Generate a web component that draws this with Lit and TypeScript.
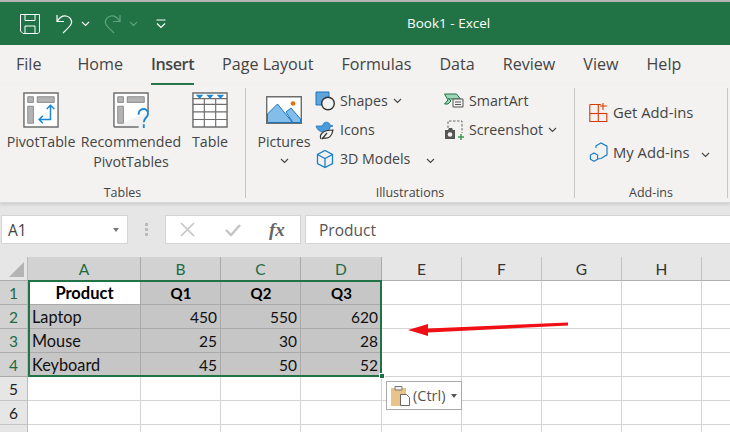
import { LitElement, html, css, svg } from "lit";
import { customElement } from "lit/decorators.js";

const chevron = html`<svg class="chev" width="9" height="6" viewBox="0 0 9 6"><path d="M1 1l3.500 3.500L8 1" fill="none" stroke="#444" stroke-width="1.100"/></svg>`;

const gridIcon = (body: unknown) => html`<svg width="36" height="36" viewBox="0 0 38 38">${body}</svg>`;

const icons = {
  pivot: gridIcon(svg`
    <path d="M1 1h36v36H1z" fill="#fff" stroke="#6d6d6d" stroke-width="1.500"/>
    <path d="M5 5h6v6H5zM15 5h18v6H15zM5 15h6v18H5z" fill="#b3b3b3" stroke="#8a8a8a"/>
    <path d="M17 29h12V15M25 18l4-4 4 4M21 25l-4 4 4 4" fill="none" stroke="#1b86d1" stroke-width="1.600"/>`),
  recommended: gridIcon(svg`
    <path d="M1 37V1h36v20M1 37h26" fill="#fff" stroke="#6d6d6d" stroke-width="1.500"/>
    <path d="M5 5h6v6H5zM15 5h18v6H15zM5 15h6v18H5z" fill="#b3b3b3" stroke="#8a8a8a"/>
    <path d="M27 24c0-8 10-8 10-1 0 4-4.500 4-4.500 9M32.500 34v4" fill="none" stroke="#1b86d1" stroke-width="2"/>`),
  table: gridIcon(svg`
    <path d="M1 1h36v36H1z" fill="#fff" stroke="#6d6d6d" stroke-width="1.500"/>
    <path d="M1 13h36M1 21h36M1 29h36M13 7v30M25 7v30M1 7h36" fill="none" stroke="#6d6d6d" stroke-width="1.200"/>
    <path d="M4 3h8l-4 4zM15 3h8l-4 4zM26 3h8l-4 4z" fill="#1b86d1"/>`),
  picture: html`<svg width="36" height="28" viewBox="0 0 36 28">
    <path d="M.7.700h34.600v26.600H.7z" fill="#fff" stroke="#6d6d6d" stroke-width="1.400"/>
    <path d="M1.500 18l10-10 15 18.500H1.500z" fill="#83bdea" stroke="#1b75bb"/>
    <path d="M20 16l5-4 9.500 11v3.500H27z" fill="#83bdea" stroke="#1b75bb"/>
    <circle cx="27" cy="7.500" r="2.300" fill="#e5700f"/>
  </svg>`,
  shapes: html`<svg width="20" height="20" viewBox="0 0 20 20"><path d="M1 1h13v13H1z" fill="#5ea5de" stroke="#1b75bb"/><circle cx="13" cy="12.500" r="6.300" fill="#f3f2f1" stroke="#333" stroke-width="1.400"/></svg>`,
  bird: html`<svg width="20" height="20" viewBox="0 0 20 20"><path d="M1 6l6 0 2-3c3-2 6 0 6 2l3 1-3 1c0 3-3 5-6 5C4 12 2 9 1 6z" fill="#4a9bdc" stroke="#1b75bb" stroke-width=".8"/><path d="M6 19c-2-4 1-9 12-9-1 6-4 9-9 8l-2 1 5-6" fill="#f3f2f1" stroke="#333" stroke-width="1.200"/></svg>`,
  cube: html`<svg width="20" height="20" viewBox="0 0 20 20"><path d="M10 1.500l7.500 4v9l-7.500 4-7.500-4v-9zM2.500 5.500l7.500 4 7.500-4M10 9.500v9" fill="none" stroke="#1b7fc9" stroke-width="1.300"/></svg>`,
  smartart: html`<svg width="20" height="16" viewBox="0 0 20 16"><path d="M.5 1h12l4 5H5l-1-1 3 3-3 3H.5l3.500-4z" fill="#9fd5b4" stroke="#217346"/><path d="M9 6h10v8H9z" fill="#f3f2f1" stroke="#555"/><path d="M11 9h6M11 11.500h6" stroke="#555"/></svg>`,
  screenshot: html`<svg width="20" height="20" viewBox="0 0 20 20"><path d="M4 8V1h14v12" fill="none" stroke="#666" stroke-dasharray="2.500 1.500"/><path d="M1 10h3l1-2h3l1 2h2v9H1z" fill="#555"/><circle cx="6" cy="14.500" r="2.300" fill="#f3f2f1"/><path d="M17 14v6M14 17h6" stroke="#3a9c4f" stroke-width="1.500"/></svg>`,
  getAddins: html`<svg width="20" height="20" viewBox="0 0 20 20"><path d="M.8 2.500h11M.8 2.500v17h17v-8h-17M9.300 2.500v17M14 1v7M11 4h7" fill="none" stroke="#d83b01" stroke-width="1.100"/><path d="M.8 11.500h17" stroke="#d83b01" stroke-width="1.100"/></svg>`,
  myAddins: html`<svg width="20" height="20" viewBox="0 0 20 20"><path d="M7 6V3.800L12 1l6 3.200v8.600L12 16.500l-3 .5" fill="none" stroke="#1b7fc9" stroke-width="1.200"/><path d="M5 11l3.600 2v4.200L5 19.300l-3.600-2.100V13z" fill="none" stroke="#1b7fc9" stroke-width="1.200"/></svg>`,
};

const tabs = ["File", "Home", "Insert", "Page Layout", "Formulas", "Data", "Review", "View", "Help"];
// the ninth column is only a sliver in the window, its label falls outside
const columns = ["A", "B", "C", "D", "E", "F", "G", "H", ""];
const rows: string[][] = [
  ["Product", "Q1", "Q2", "Q3"],
  ["Laptop", "450", "550", "620"],
  ["Mouse", "25", "30", "28"],
  ["Keyboard", "45", "50", "52"],
  [],
  [],
  [],
];

@customElement("app-root")
export class AppRoot extends LitElement {
  static styles = css`
    :host {
      display: block;
      position: relative;
      width: 730px;
      height: 432px;
      overflow: hidden;
      background: #e6e6e6;
      font-family: "Open Sans", "Noto Sans", sans-serif;
      color: #444;
    }
    .titlebar {
      height: 43px;
      border-top: 2px solid #b5b5b5;
      background: #217346;
      display: flex;
      align-items: center;
      position: relative;
      padding-left: 20px;
      gap: 15px;
    }
    .titlebar .title {
      position: absolute;
      left: 407px;
      top: 12px;
      color: #fff;
      font-size: 13.500px;
      line-height: 18px;
    }
    .qat { display: flex; align-items: center; gap: 7px; }
    .qat.redo { margin-left: -2px; }
    .customize { margin-left: 3px; }
    .tabs {
      height: 40px;
      background: #f3f2f1;
      display: flex;
      gap: 28px;
      padding-left: 16px;
      font-size: 16.100px;
      line-height: 38px;
    }
    .tab.file { margin-right: 8px; }
    .tab.active {
      font-weight: 600;
      letter-spacing: -0.4px;
      position: relative;
    }
    .tab.active::after {
      content: "";
      position: absolute;
      left: 0;
      right: 0;
      bottom: -1px;
      height: 3px;
      background: #217346;
    }
    .ribbon {
      height: 117px;
      background: #f3f2f1;
      display: flex;
      border-bottom: 1px solid #d6d6d6;
      box-shadow: 0 2px 3px #d0d0d0;
      position: relative;
      font-size: 14.200px;
      line-height: 20px;
    }
    .group {
      position: relative;
      height: 110px;
      margin-top: 3px;
      border-right: 1px solid #c8c6c4;
      display: flex;
      box-sizing: border-box;
    }
    .group.tables { width: 246px; padding-left: 7px; }
    .group.illus { width: 329px; padding-left: 11px; }
    .group.addins { width: 153px; padding-left: 14px; flex-direction: column; }
    .label {
      position: absolute;
      left: 0;
      right: 0;
      bottom: -3px;
      text-align: center;
      font-size: 12.500px;
      line-height: 16px;
    }
    .big {
      display: flex;
      flex-direction: column;
      align-items: center;
      text-align: center;
      padding-top: 4px;
    }
    .big svg { display: block; margin-bottom: 4px; }
    .big.pivot { width: 68px; }
    .big.rec { width: 112px; }
    .big.tbl { width: 46px; }
    .big.pics { width: 54px; padding-top: 8px; }
    .big.pics svg { margin-bottom: 8px; }
    .big.pics .chev { margin: 6px 0 0; }
    .stack { display: flex; flex-direction: column; gap: 9px; padding-top: 3px; }
    .stack.first { margin-left: 4px; width: 129px; }
    .stack.second { padding-top: 3px; }
    .item { display: flex; align-items: center; gap: 5px; height: 20px; white-space: nowrap; }
    .item .push { margin-left: 11px; }
    .addin { display: flex; align-items: center; gap: 4px; height: 20px; white-space: nowrap; font-size: 14.800px; }
    .addin.get { margin-top: 14px; }
    .addin.my { margin-top: 20px; }
    .addin .push { margin-left: 7px; }
    .formula {
      height: 55px;
      display: flex;
      padding-top: 12px;
      box-sizing: border-box;
      font-size: 15.500px;
    }
    .box {
      height: 29px;
      background: #fff;
      border: 1px solid #d4d4d4;
      box-sizing: border-box;
      display: flex;
      align-items: center;
    }
    .namebox { width: 127px; margin-left: 1px; padding: 0 8px 0 6px; justify-content: space-between; }
    .caret { width: 0; height: 0; border: 3.500px solid transparent; border-top: 4px solid #777; border-bottom: 0; }
    .dots { width: 37px; display: flex; flex-direction: column; align-items: center; justify-content: center; gap: 2px; height: 29px; }
    .dots i { width: 3px; height: 3px; background: #bbb; display: block; }
    .buttons { width: 136px; padding-left: 13px; }
    .buttons svg { display: block; }
    .cross { margin-right: 27px; }
    .tick { margin-right: 27px; }
    .fx { font: italic 700 19px "Liberation Serif", serif; color: #666; }
    .input { flex: 1; margin-left: 4px; margin-right: -1px; padding-left: 13px; color: #555; }
    .sheet {
      position: relative;
      display: grid;
      grid-template-columns: 28px 113px 80px 80px 81px 80px 80px 80px 80px 80px;
      grid-auto-rows: 24px;
      background: #fff;
      margin-top: -1px;
      font-family: Lato, "Liberation Sans", sans-serif;
      font-size: 15.500px;
      color: #222;
    }
    .sheet > div { box-sizing: border-box; line-height: 24px; white-space: nowrap; overflow: hidden; }
    .corner { background: #e6e6e6; border-right: 1px solid #bbb; border-bottom: 1px solid #aaa; position: relative; }
    .corner::after {
      content: "";
      position: absolute;
      right: 3px;
      bottom: 3px;
      border-style: solid;
      border-width: 0 0 15px 15px;
      border-color: transparent transparent #b4b4b4 transparent;
    }
    .ch { text-align: center; background: #e6e6e6; color: #333; border-right: 1px solid #c4c4c4; border-bottom: 1px solid #b0b0b0; }
    .ch.sel { background: #d2d2d2; color: #1d6b41; border-right-color: #a9a9a9; }
    .rh { text-align: center; background: #e6e6e6; color: #222; border-right: 1px solid #bbb; border-bottom: 1px solid #c4c4c4; }
    .rh.sel { background: #d2d2d2; color: #1d6b41; border-bottom-color: #aaa; }
    .c { padding: 0 3px 0 4px; border-right: 1px solid #d4d4d4; border-bottom: 1px solid #d4d4d4; color: #111; font-size: 16.300px; }
    .c.sel { background: #c6c6c6; border-color: #aaa; }
    .c.num { text-align: right; font-size: 15.500px; }
    .c.head { font-weight: 700; text-align: center; color: #000; font-size: 15px; }
    .c.head.white { background: #fff; font-size: 16.500px; }
    .selection {
      position: absolute;
      left: 28px;
      top: 23px;
      width: 354px;
      height: 97px;
      border: 2px solid #217346;
      box-sizing: border-box;
      pointer-events: none;
    }
    .handle {
      position: absolute;
      left: 379px;
      top: 116px;
      width: 6px;
      height: 6px;
      background: #217346;
      border: 1px solid #fff;
    }
    .arrow { position: absolute; left: 400px; top: 315px; }
    .paste {
      position: absolute;
      left: 386px;
      top: 381px;
      width: 76px;
      height: 29px;
      box-sizing: border-box;
      background: #fff;
      border: 1px solid #aaa;
      display: flex;
      align-items: center;
      padding-left: 4px;
      gap: 2px;
      font-size: 14.500px;
      color: #555;
    }
    .paste .caret { border-top-color: #555; margin-left: 4px; }
  `;

  renderSheet() {
    return html`<div class="sheet">
      <div class="corner"></div>
      ${columns.map((c, i) => html`<div class="ch ${i < 4 ? "sel" : ""}">${c}</div>`)}
      ${rows.map((row, r) => html`
        <div class="rh ${r < 4 ? "sel" : ""}">${r + 1}</div>
        ${columns.map((_, c) => {
          const inRange = r < 4 && c < 4;
          const cls = [
            "c",
            inRange ? "sel" : "",
            r === 0 && c < 4 ? "head" : "",
            r === 0 && c === 0 ? "white" : "",
            r > 0 && c > 0 ? "num" : "",
          ].join(" ");
          return html`<div class=${cls}>${row[c] ?? ""}</div>`;
        })}
      `)}
      <div class="selection"></div>
      <div class="handle"></div>
    </div>`;
  }

  render() {
    return html`
      <div class="titlebar">
        <svg width="20" height="20" viewBox="0 0 20 20"><path d="M.5.500h19v17.500l-1.500 1.500H3L.5 17z M5 .5v6h10v-6M5 19v-7h10v7" fill="none" stroke="#fff" stroke-width="1"/></svg>
        <div class="qat">
          <svg width="19" height="20" viewBox="0 0 19 20"><path d="M2 1v6.500h7M2.500 7C5 3 8 1.500 11 2c4 .7 6 4 5.500 7-.3 2-2 4-8.500 10" fill="none" stroke="#fff" stroke-width="1.200"/></svg>
          <svg width="9" height="6" viewBox="0 0 9 6"><path d="M1 1l3.500 3.500L8 1" fill="none" stroke="#fff" stroke-width="1.100"/></svg>
        </div>
        <div class="qat redo">
          <svg width="19" height="20" viewBox="0 0 19 20"><path d="M17 1v6.500h-7M16.500 7C14 3 11 1.500 8 2 4 2.700 2 6 2.500 9c.3 2 2 4 8.500 10" fill="none" stroke="#5fa382" stroke-width="1.200"/></svg>
          <svg width="9" height="6" viewBox="0 0 9 6"><path d="M1 1l3.500 3.500L8 1" fill="none" stroke="#5fa382" stroke-width="1.100"/></svg>
        </div>
        <svg class="customize" width="10" height="10" viewBox="0 0 10 10"><path d="M.5 1h9" stroke="#fff"/><path d="M1 4.500l4 4 4-4" fill="none" stroke="#fff" stroke-width="1.100"/></svg>
        <div class="title">Book1 - Excel</div>
      </div>

      <div class="tabs">
        ${tabs.map((t, i) => html`<div class="tab ${i === 0 ? "file" : ""} ${t === "Insert" ? "active" : ""}">${t}</div>`)}
      </div>

      <div class="ribbon">
        <div class="group tables">
          <div class="big pivot">${icons.pivot}PivotTable</div>
          <div class="big rec">${icons.recommended}Recommended<br />PivotTables</div>
          <div class="big tbl">${icons.table}Table</div>
          <div class="label">Tables</div>
        </div>
        <div class="group illus">
          <div class="big pics">${icons.picture}Pictures ${chevron}</div>
          <div class="stack first">
            <div class="item">${icons.shapes}Shapes ${chevron}</div>
            <div class="item">${icons.bird}Icons</div>
            <div class="item">${icons.cube}3D Models <span class="push">${chevron}</span></div>
          </div>
          <div class="stack second">
            <div class="item">${icons.smartart}SmartArt</div>
            <div class="item">${icons.screenshot}Screenshot ${chevron}</div>
          </div>
          <div class="label">Illustrations</div>
        </div>
        <div class="group addins">
          <div class="addin get">${icons.getAddins}Get Add-ins</div>
          <div class="addin my">${icons.myAddins}My Add-ins <span class="push">${chevron}</span></div>
          <div class="label">Add-ins</div>
        </div>
      </div>

      <div class="formula">
        <div class="box namebox">A1<span class="caret"></span></div>
        <div class="dots"><i></i><i></i><i></i></div>
        <div class="box buttons">
          <svg class="cross" width="18" height="16" viewBox="0 0 18 16"><path d="M2 1l13 13M15 1L2 14" stroke="#c4c4c4" stroke-width="1.600"/></svg>
          <svg class="tick" width="18" height="16" viewBox="0 0 18 16"><path d="M2 8l5 5L16 3" fill="none" stroke="#c4c4c4" stroke-width="2.400"/></svg>
          <span class="fx">fx</span>
        </div>
        <div class="box input">Product</div>
      </div>

      ${this.renderSheet()}

      <svg class="arrow" width="172" height="24" viewBox="0 0 172 24">
        <path d="M8 15L28 9v4.500L168 7.500v3L28 17.500V21z" fill="#f00f14"/>
      </svg>

      <div class="paste">
        <svg width="20" height="21" viewBox="0 0 20 21">
          <path d="M0 3h15v18H0z" fill="#e9c48a"/>
          <path d="M4 1.500h7V5H4z" fill="#f3f2f1" stroke="#777"/>
          <path d="M9.500 9.500h6l3 3v8h-9z" fill="#fff" stroke="#666"/>
        </svg>
        (Ctrl) <span class="caret"></span>
      </div>
    `;
  }
}
